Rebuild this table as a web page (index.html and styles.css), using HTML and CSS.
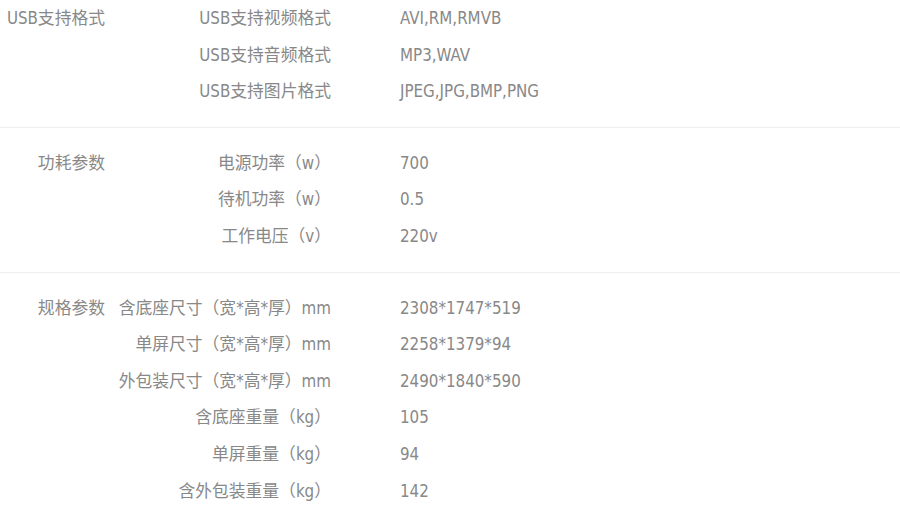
FILE: index.html
```html
<!DOCTYPE html>
<html lang="zh-CN">
<head>
    <meta charset="UTF-8">
    <meta name="viewport" content="width=device-width, initial-scale=1.0">
    <title>规格参数</title>
    <link rel="stylesheet" href="styles.css">
</head>
<body>
    <div class="spec-table">
        <div class="spec-group">
            <div class="group-title">USB支持格式</div>
            <ul class="spec-list">
                <li><span class="spec-name">USB支持视频格式</span><span class="spec-value">AVI,RM,RMVB</span></li>
                <li><span class="spec-name">USB支持音频格式</span><span class="spec-value">MP3,WAV</span></li>
                <li><span class="spec-name">USB支持图片格式</span><span class="spec-value">JPEG,JPG,BMP,PNG</span></li>
            </ul>
        </div>

        <div class="spec-group">
            <div class="group-title">功耗参数</div>
            <ul class="spec-list">
                <li><span class="spec-name">电源功率（w）</span><span class="spec-value">700</span></li>
                <li><span class="spec-name">待机功率（w）</span><span class="spec-value">0.5</span></li>
                <li><span class="spec-name">工作电压（v）</span><span class="spec-value">220v</span></li>
            </ul>
        </div>

        <div class="spec-group">
            <div class="group-title">规格参数</div>
            <ul class="spec-list">
                <li><span class="spec-name">含底座尺寸（宽*高*厚）mm</span><span class="spec-value">2308*1747*519</span></li>
                <li><span class="spec-name">单屏尺寸（宽*高*厚）mm</span><span class="spec-value">2258*1379*94</span></li>
                <li><span class="spec-name">外包装尺寸（宽*高*厚）mm</span><span class="spec-value">2490*1840*590</span></li>
                <li><span class="spec-name">含底座重量（kg）</span><span class="spec-value">105</span></li>
                <li><span class="spec-name">单屏重量（kg）</span><span class="spec-value">94</span></li>
                <li><span class="spec-name">含外包装重量（kg）</span><span class="spec-value">142</span></li>
            </ul>
        </div>
    </div>
</body>
</html>
```

FILE: styles.css
```css
body {
    font-family: "DejaVu Sans Condensed", "Noto Sans CJK SC", sans-serif;
    font-size: 16.8px;
    color: #888;
    background-color: #fff;
    margin: 0;
}

.spec-table {
    width: 100%;
}

.spec-group {
    display: flex;
    padding: 17px 0;
    border-bottom: 1px solid #eee;
}

.spec-group:first-child {
    padding-top: 0;
}

.spec-group:last-child {
    border-bottom: none;
}

.group-title {
    width: 105px;
    text-align: right;
    line-height: 36.6px;
    white-space: nowrap;
}

.spec-list {
    list-style: none;
    margin: 0;
    padding: 0;
    flex: 1;
}

.spec-list li {
    display: flex;
    line-height: 36.6px;
}

.spec-name {
    width: 226px;
    text-align: right;
    white-space: nowrap;
}

.spec-value {
    margin-left: 69px;
}
```
